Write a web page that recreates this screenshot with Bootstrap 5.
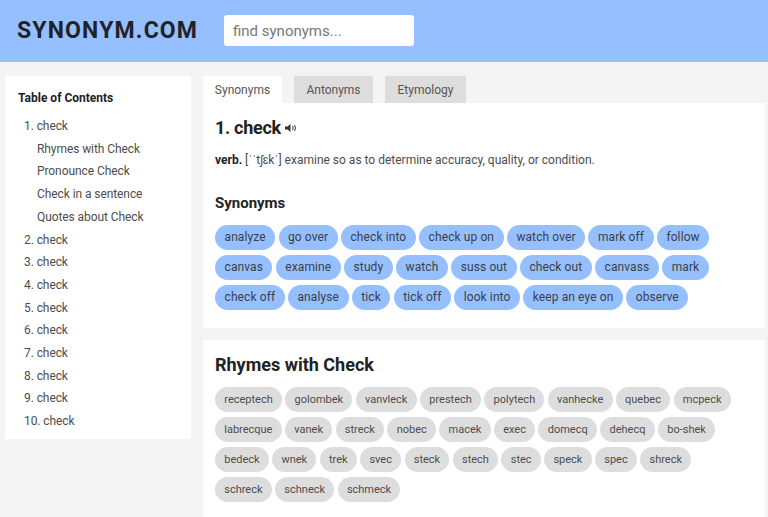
<!DOCTYPE html>
<html lang="en"><head><meta charset="utf-8"><title>Synonym.com</title>
<link href="https://cdn.jsdelivr.net/npm/bootstrap@5.3.0/dist/css/bootstrap.min.css" rel="stylesheet">
<style>
html,body{height:517px;overflow:hidden}
body{background:#f4f4f4;font-family:Roboto,sans-serif;color:#333;font-size:12px}
.topbar{height:62px;background:#96bfff;padding:15px 17px 0;gap:25px}
.logo{font:700 23px/32px Roboto,sans-serif;letter-spacing:1.15px;color:#1f2328;width:182px;white-space:nowrap}
.finder{width:190px;height:31px;border:0;border-radius:3px;padding:0 9px;font-size:15px;font-family:Roboto,sans-serif}
.finder::placeholder{color:#777}
.shell{padding:14px 3px 0 5px;gap:12px}
.toc{width:186px;height:363px;background:#fff;padding:14px 13px;flex:none}
.toc-title{font-weight:700;font-size:12px;line-height:16px;color:#222;margin-bottom:9px}
.toc-list a{display:block;color:#4d4d4d;text-decoration:none;line-height:22.7px;font-size:12px;padding-left:6px;letter-spacing:-.08px}
.toc-list a.sub{padding-left:19px}
.mainpane{width:562px}
.tabs-row{height:27px;gap:12px}
.tabx{width:79px;height:27px;background:#ddd;color:#555;text-align:center;line-height:28px;font-size:12px;border-radius:2px 2px 0 0;box-shadow:0 -4px 5px -3px rgba(0,0,0,.04)}
.tabx.on{background:#fff;box-shadow:none}
.tabx.wide{width:81px}
.sheet{background:#fff;padding:14px 20px 18px 12px;margin-bottom:12px}
.h-word{font-size:18px;font-weight:700;line-height:22px;color:#222;letter-spacing:-.3px}
.def{margin-top:13px;line-height:16px;color:#4d4d4d}
.def b{color:#222}
.h-sec{font-size:15px;font-weight:700;line-height:20px;margin:25px 0 12px;color:#222}
.h-big{font-size:18px;font-weight:700;line-height:22px;margin-bottom:11px;color:#222}
.tags{gap:5px 3.3px}
.tagb{background:#96bfff;color:#3a3f47;border-radius:13px;height:25px;line-height:25px;padding:0 9.5px;letter-spacing:.1px}
.tagg{background:#ddd;color:#4d4d4d;border-radius:13px;height:25px;line-height:25px;padding:0 9.25px;font-size:11px}
</style></head><body>
<header class="topbar d-flex align-items-start">
<div class="logo">SYNONYM.COM</div>
<input class="finder" placeholder="find synonyms...">
</header>
<div class="shell d-flex">
<aside class="toc">
<div class="toc-title">Table of Contents</div>
<nav class="toc-list">
<a href="#">1. check</a><a class="sub" href="#">Rhymes with Check</a><a class="sub" href="#">Pronounce Check</a><a class="sub" href="#">Check in a sentence</a><a class="sub" href="#">Quotes about Check</a><a href="#">2. check</a><a href="#">3. check</a><a href="#">4. check</a><a href="#">5. check</a><a href="#">6. check</a><a href="#">7. check</a><a href="#">8. check</a><a href="#">9. check</a><a href="#">10. check</a>
</nav>
</aside>
<main class="mainpane">
<div class="tabs-row d-flex"><div class="tabx on">Synonyms</div><div class="tabx">Antonyms</div><div class="tabx wide">Etymology</div></div>
<section class="sheet">
<div class="h-word d-flex align-items-center gap-1">1. check <svg width="11" height="8" viewBox="0 0 11 8"><path d="M0 2.500h2.500L5.500 0v8L2.500 5.500H0z" fill="#333"/><path d="M7.500 2q1.500 2 0 4M9.500 1q2 3 0 6" stroke="#333" fill="none"/></svg></div>
<div class="def"><b>verb.</b> [ˈˈtʃɛkˈ] examine so as to determine accuracy, quality, or condition.</div>
<div class="h-sec">Synonyms</div>
<div class="tags d-flex flex-wrap">
<span class="tagb">analyze</span><span class="tagb">go over</span><span class="tagb">check into</span><span class="tagb">check up on</span><span class="tagb">watch over</span><span class="tagb">mark off</span><span class="tagb">follow</span><span class="tagb">canvas</span><span class="tagb">examine</span><span class="tagb">study</span><span class="tagb">watch</span><span class="tagb">suss out</span><span class="tagb">check out</span><span class="tagb">canvass</span><span class="tagb">mark</span><span class="tagb">check off</span><span class="tagb">analyse</span><span class="tagb">tick</span><span class="tagb">tick off</span><span class="tagb">look into</span><span class="tagb">keep an eye on</span><span class="tagb">observe</span>
</div>
</section>
<section class="sheet">
<div class="h-big">Rhymes with Check</div>
<div class="tags d-flex flex-wrap">
<span class="tagg">receptech</span><span class="tagg">golombek</span><span class="tagg">vanvleck</span><span class="tagg">prestech</span><span class="tagg">polytech</span><span class="tagg">vanhecke</span><span class="tagg">quebec</span><span class="tagg">mcpeck</span><span class="tagg">labrecque</span><span class="tagg">vanek</span><span class="tagg">streck</span><span class="tagg">nobec</span><span class="tagg">macek</span><span class="tagg">exec</span><span class="tagg">domecq</span><span class="tagg">dehecq</span><span class="tagg">bo-shek</span><span class="tagg">bedeck</span><span class="tagg">wnek</span><span class="tagg">trek</span><span class="tagg">svec</span><span class="tagg">steck</span><span class="tagg">stech</span><span class="tagg">stec</span><span class="tagg">speck</span><span class="tagg">spec</span><span class="tagg">shreck</span><span class="tagg">schreck</span><span class="tagg">schneck</span><span class="tagg">schmeck</span>
</div>
</section>
</main>
</div>
<script src="https://cdn.jsdelivr.net/npm/bootstrap@5.3.0/dist/js/bootstrap.bundle.min.js"></script>
</body></html>
